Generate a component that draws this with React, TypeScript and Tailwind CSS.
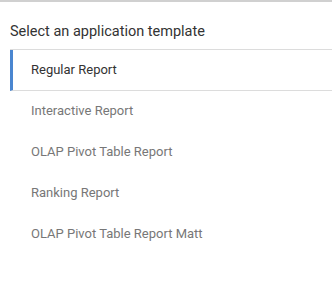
const templates = [
  'Regular Report',
  'Interactive Report',
  'OLAP Pivot Table Report',
  'Ranking Report',
  'OLAP Pivot Table Report Matt',
];

export default function App() {
  const selected = 0;

  return (
    <div className="w-[332px] h-[301px] bg-white border-t-2 border-[#d0d0d0] font-['Roboto',sans-serif]">
      <h2 className="pl-[10px] pt-[21px] pb-[8px] text-[14.5px] leading-[18px] text-[#333] font-normal">
        Select an application template
      </h2>
      <ul className="ml-[10px] border-t border-[#dcdcdc]">
        {templates.map((t, i) => (
          <li
            key={t}
            className={
              i === selected
                ? 'h-[41px] border-l-[3px] border-l-[#4a86d0] border-b border-b-[#dcdcdc] pl-[18px] text-[13px] leading-[40px] text-[#333]'
                : 'h-[41px] border-l-[3px] border-l-transparent border-b border-b-transparent pl-[18px] text-[13px] leading-[40px] text-[#777]'
            }
          >
            {t}
          </li>
        ))}
      </ul>
    </div>
  );
}
